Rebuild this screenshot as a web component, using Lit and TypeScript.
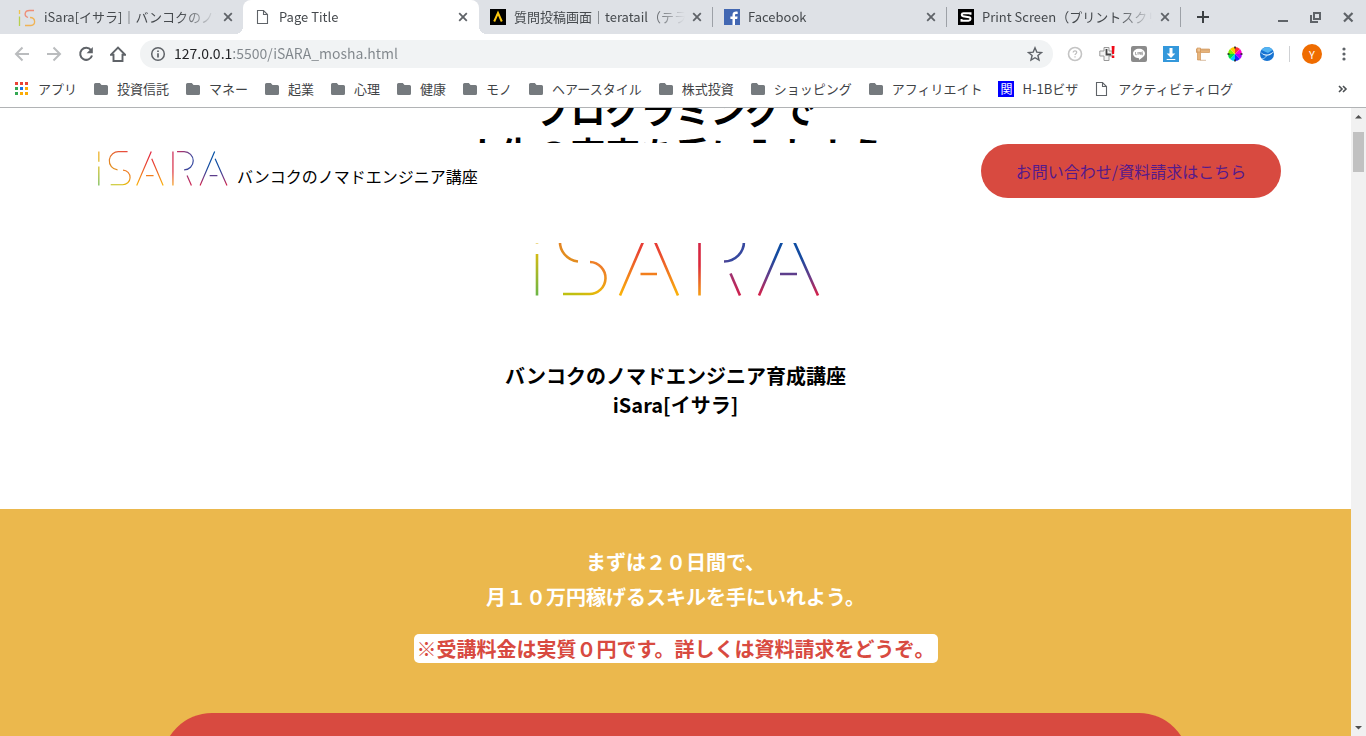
import { LitElement, html, css, svg } from "lit";
import { customElement } from "lit/decorators.js";

const closeIcon = html`<svg width="16" height="16" viewBox="0 0 16 16" aria-hidden="true">
  <path d="M4.2 4.2l7.6 7.6M11.8 4.2l-7.6 7.6" stroke="#5f6368" stroke-width="1.8" fill="none" />
</svg>`;

const fileIcon = html`<svg width="16" height="16" viewBox="0 0 16 16" aria-hidden="true">
  <path d="M2.500 1.500h6L12.500 5.500v9h-10zM8.500 1.500v4h4" stroke="#5f6368" stroke-width="1.1" fill="none" />
</svg>`;

const folderIcon = html`<svg width="16" height="16" viewBox="0 0 16 16" aria-hidden="true">
  <path d="M2.5 2h4.3l1.7 2h5a1.5 1.5 0 0 1 1.5 1.5v7a1.5 1.5 0 0 1-1.5 1.5h-11A1.5 1.5 0 0 1 1 12.500V3.500A1.500 1.500 0 0 1 2.500 2z" fill="#757a7e" />
</svg>`;

const appsIcon = html`<svg width="16" height="16" viewBox="0 0 16 16" aria-hidden="true">
  <path d="M1 1h3v3H1zM6 1h3v3H6zM11 1h3v3h-3z" fill="#ea4335" />
  <path d="M1 6h3v3H1zM1 11h3v3H1z" fill="#34a853" />
  <path d="M6 6h3v3H6z" fill="#1a73e8" />
  <path d="M11 6h3v3h-3zM6 11h3v3H6zM11 11h3v3h-3z" fill="#fbab05" />
</svg>`;

const isaraFavicon = html`<svg width="18" height="18" viewBox="0 0 18 18" fill="none" stroke-width="1.3" aria-hidden="true">
  <path d="M1.500 1v4" stroke="#f1c34c" />
  <path d="M1.500 7.500V17" stroke="#b7cf4e" />
  <path d="M16 1.500h-4.500c-5 0-6 5.500-1.500 7" stroke="#ee8d76" />
  <path d="M12 8.500c6 0 6 8 1 8H7" stroke="#f0b355" />
</svg>`;

const teratailFavicon = html`<svg width="16" height="16" viewBox="0 0 16 16" aria-hidden="true">
  <rect width="16" height="16" fill="#000" />
  <path d="M4.200 12.500L8 4l3.800 8.500" fill="none" stroke="#fbc711" stroke-width="2" />
</svg>`;

const facebookFavicon = html`<svg width="16" height="16" viewBox="0 0 16 16" aria-hidden="true">
  <rect width="16" height="16" fill="#4267b2" />
  <path d="M11 16V10h2.200l.4-2.400H11V6.200c0-.8.300-1.300 1.400-1.300h1.300V2.700c-2.900-.5-5.200.3-5.200 3.200v1.700H6.400V10h2.100v6z" fill="#fff" />
</svg>`;

const sFavicon = html`<svg width="16" height="16" viewBox="0 0 16 16" aria-hidden="true">
  <rect width="16" height="16" fill="#000" />
  <path d="M12.500 5.800V4.300H5.500C3.300 4.300 3.200 7 5 7.300l6 .9c2.200.4 1.900 3.500-.5 3.500h-7v-1.600" fill="none" stroke="#fff" stroke-width="2" />
</svg>`;

const visaIcon = html`<span class="visa">関</span>`;

const tabs = [
  { title: "iSara[イサラ]｜バンコクのノマドエンジニア", icon: isaraFavicon, state: "first" },
  { title: "Page Title", icon: fileIcon, state: "active" },
  { title: "質問投稿画面｜teratail（テラテイル）", icon: teratailFavicon, state: "lined" },
  { title: "Facebook", icon: facebookFavicon, state: "lined" },
  { title: "Print Screen（プリントスクリーン）", icon: sFavicon, state: "lined" },
];

const bookmarks = [
  { label: "アプリ", icon: appsIcon },
  ...["投資信託", "マネー", "起業", "心理", "健康", "モノ", "ヘアースタイル", "株式投資", "ショッピング", "アフィリエイト"].map(
    (label) => ({ label, icon: folderIcon })
  ),
  { label: "H-1Bビザ", icon: visaIcon },
  { label: "アクティビティログ", icon: fileIcon },
];

const extensions = [
  {
    name: "ヘルプ",
    art: svg`<circle cx="8" cy="8" r="6.500" fill="none" stroke="#c4c4c4" stroke-width="1.600"/>
      <path d="M6.200 6.600c0-2.400 3.700-2.200 3.500-.1-.1 1.200-1.700 1.200-1.700 2.600M8 10.300v1.300" fill="none" stroke="#bdbdbd" stroke-width="1.200"/>`,
  },
  {
    name: "時計",
    art: svg`<path d="M5 1.500h5V5h3v5h-3v4.500H5V10H.800V5H5z" fill="#f3f3f3" stroke="#999" stroke-width="1"/>
      <path d="M7.500 3v5.500H12" fill="none" stroke="#444" stroke-width="1.800"/>
      <path d="M12.600 0h3l-.5 8h-2zM12.800 9.500h2.500V12h-2.500z" fill="#f00a18"/>`,
  },
  {
    name: "LINE",
    art: svg`<rect width="16" height="16" rx="2" fill="#8b8b8b"/>
      <path d="M8 2.700c3.300 0 6 2.100 6 4.800 0 2.200-2.500 4.300-6 6.500v-1.800c-3.300 0-6-2-6-4.700s2.700-4.800 6-4.800z" fill="#fff"/>
      <path d="M4.500 6v2.700h1.300M6.900 6v2.700M8 8.700V6l1.500 2.500V6M12 6h-1.300v2.700H12M10.700 7.400H12" fill="none" stroke="#8b8b8b" stroke-width=".7"/>`,
  },
  {
    name: "ダウンロード",
    art: svg`<rect width="16" height="16" fill="#3498db"/>
      <path d="M6.500 2h3v5.500h2.800L8 12 3.700 7.500h2.800zM3.700 13h8.600v1H3.700z" fill="#fff"/>`,
  },
  {
    name: "定規",
    art: svg`<path d="M1.500 3h13v3.500h-9V14H2.500V6.500h-1z" fill="#e8b47a" stroke="#c98a49" stroke-width=".6"/>
      <path d="M2 2h3.500v4H2z" fill="#f0c492" stroke="#c98a49" stroke-width=".6"/>
      <path d="M7 3.500v1.500M9 3.500v1.500M11 3.500v1.500M13 3.500v1.500M5 14.300h6" stroke="#c9a27a" stroke-width=".7"/>`,
  },
  {
    name: "カラーピッカー",
    art: svg`<path d="M8 8V1a7 7 0 0 1 5 2z" fill="#f33"/><path d="M8 8l5-5a7 7 0 0 1 2 5z" fill="#f0c"/>
      <path d="M8 8h7a7 7 0 0 1-2 5z" fill="#a0f"/><path d="M8 8l5 5a7 7 0 0 1-5 2z" fill="#22f"/>
      <path d="M8 8v7a7 7 0 0 1-5-2z" fill="#0cf"/><path d="M8 8l-5 5a7 7 0 0 1-2-5z" fill="#0d4"/>
      <path d="M8 8H1a7 7 0 0 1 2-5z" fill="#8e0"/><path d="M8 8L3 3a7 7 0 0 1 5-2z" fill="#fc0"/>
      <path d="M8 .5v2M8 13.500v2M.5 8h2M13.500 8h2" stroke="#222" stroke-width="1.600"/>`,
  },
  {
    name: "メール",
    art: svg`<circle cx="8" cy="8" r="7" fill="#1673d2"/>
      <path d="M2.500 4c3-4 8-4 11 0L9 7z" fill="#54b4f2"/>
      <path d="M1.200 5.500C4.500 9.500 9 9.500 14.800 5.500 11 11 5 11.500 1.200 5.500z" fill="#f2faff"/>
      <path d="M3 13c2-.5 3.500-1.500 4.500-3" fill="none" stroke="#9fd2f7" stroke-width="1"/>`,
  },
];

/** The rainbow line-drawn iSARA mark. Its height follows its width. */
@customElement("isara-logo")
export class IsaraLogo extends LitElement {
  static styles = css`
    :host {
      display: block;
    }
    .mark {
      display: block;
      width: 100%;
      overflow: visible;
      fill: none;
      stroke-width: 2.600;
    }
  `;

  render() {
    return html`<svg class="mark" viewBox="-2 0 285 76" role="img" aria-label="iSARA">
      <defs>
        <linearGradient id="i" gradientUnits="userSpaceOnUse" x1="0" y1="0" x2="0" y2="76">
          <stop offset="0" stop-color="#f2a81d" /><stop offset=".45" stop-color="#d3bb15" /><stop offset="1" stop-color="#6ab546" />
        </linearGradient>
        <linearGradient id="s1" gradientUnits="userSpaceOnUse" x1="64" y1="0" x2="34" y2="42">
          <stop offset="0" stop-color="#e8483f" /><stop offset="1" stop-color="#e2921d" />
        </linearGradient>
        <linearGradient id="s2" gradientUnits="userSpaceOnUse" x1="62" y1="42" x2="40" y2="75">
          <stop offset="0" stop-color="#ee7a2b" /><stop offset=".6" stop-color="#eeb40a" /><stop offset="1" stop-color="#bfc011" />
        </linearGradient>
        <linearGradient id="a1" gradientUnits="userSpaceOnUse" x1="0" y1="0" x2="0" y2="76">
          <stop offset="0" stop-color="#e0203c" /><stop offset=".4" stop-color="#e94433" /><stop offset="1" stop-color="#fbb508" />
        </linearGradient>
        <linearGradient id="r1" gradientUnits="userSpaceOnUse" x1="0" y1="0" x2="0" y2="76">
          <stop offset="0" stop-color="#c81f50" /><stop offset=".6" stop-color="#dc2a3a" /><stop offset="1" stop-color="#f6a012" />
        </linearGradient>
        <linearGradient id="r2" gradientUnits="userSpaceOnUse" x1="173" y1="0" x2="208" y2="16">
          <stop offset="0" stop-color="#c83060" /><stop offset="1" stop-color="#36489f" />
        </linearGradient>
        <linearGradient id="r3" gradientUnits="userSpaceOnUse" x1="0" y1="50" x2="0" y2="76">
          <stop offset="0" stop-color="#953577" /><stop offset="1" stop-color="#d2214b" />
        </linearGradient>
        <linearGradient id="a2" gradientUnits="userSpaceOnUse" x1="0" y1="0" x2="0" y2="76">
          <stop offset="0" stop-color="#0053a8" /><stop offset=".5" stop-color="#174a9f" /><stop offset=".75" stop-color="#6a3b88" /><stop offset="1" stop-color="#dc1f45" />
        </linearGradient>
      </defs>
      <path stroke="url(#i)" d="M2 1V23.500M2 34V75.500" />
      <path stroke="url(#s1)" d="M65 1.500H47A20 20 0 0 0 43 41.500" />
      <path stroke="url(#s2)" d="M55 42A16 16 0 0 1 54 74H28" />
      <path stroke="url(#a1)" d="M85 75.500L117 1M118 17L143 75.500M105.500 54H122" />
      <path stroke="url(#r1)" d="M164.500 1V75.500" />
      <path stroke="url(#r2)" d="M173.500 1.500H189A20 20 0 0 1 189 41.500" />
      <path stroke="url(#r3)" d="M195.500 53.500L205 75.500" />
      <path stroke="url(#a2)" d="M224 75.500L256 1M257 17L283 75.500M245 54H262" />
    </svg>`;
  }
}

@customElement("app-root")
export class AppRoot extends LitElement {
  static styles = css`
    :host {
      display: flex;
      flex-direction: column;
      height: 100vh;
      overflow: hidden;
      background: #fff;
      color: #000;
      font-family: "Noto Sans CJK JP", sans-serif;
    }
    * {
      box-sizing: border-box;
    }
    button {
      display: grid;
      place-items: center;
      flex: none;
      padding: 0;
      border: 0;
      background: none;
      font: inherit;
    }
    a {
      text-decoration: none;
    }
    svg {
      display: block;
      flex: none;
    }

    /* tab strip */
    .tabs {
      display: flex;
      flex: none;
      height: 34px;
      padding: 0 10px;
      background: #dee1e6;
    }
    .tab {
      position: relative;
      display: flex;
      align-items: center;
      flex: 0 1 234px;
      min-width: 0;
      padding: 0 7px 0 12px;
      color: #45494d;
      font-size: 13px;
      line-height: 20px;
    }
    .tab-icon {
      display: grid;
      place-items: center;
      flex: none;
      width: 16px;
      height: 16px;
    }
    .tab-title {
      flex: 1;
      min-width: 0;
      margin-left: 8px;
      overflow: hidden;
      white-space: nowrap;
      -webkit-mask-image: linear-gradient(to left, transparent 4px, #000 40px);
      mask-image: linear-gradient(to left, transparent 4px, #000 40px);
    }
    .first {
      padding: 0 8px 0 10px;
    }
    .first .tab-icon {
      justify-content: end;
    }
    .lined::after {
      content: "";
      position: absolute;
      right: -1px;
      top: 7px;
      width: 1px;
      height: 20px;
      background: #9da1a7;
    }
    .active {
      flex-basis: 236px;
      margin: 0 -1px;
      padding-right: 8px;
      border-radius: 8px 8px 0 0;
      background: #fff;
    }
    .active::before,
    .active::after {
      content: "";
      position: absolute;
      bottom: 0;
      width: 8px;
      height: 8px;
    }
    .active::before {
      right: 100%;
      background: radial-gradient(circle at 0 0, transparent 8px, #fff 8px);
    }
    .active::after {
      left: 100%;
      background: radial-gradient(circle at 100% 0, transparent 8px, #fff 8px);
    }
    .new-tab {
      width: 46px;
    }
    .window-buttons {
      display: flex;
      gap: 16px;
      margin-left: auto;
    }

    /* toolbar */
    .toolbar {
      display: flex;
      align-items: center;
      flex: none;
      height: 40px;
      padding: 0 14px;
    }
    .nav {
      display: flex;
      gap: 16px;
    }
    .omnibox {
      display: flex;
      align-items: center;
      flex: 1;
      height: 28px;
      margin: 0 14px;
      padding: 0 10px;
      border-radius: 14px;
      background: #f1f3f4;
    }
    .url {
      flex: 1;
      min-width: 0;
      height: 24px;
      margin: 0 8px;
      padding: 0 0 2px;
      border: 0;
      outline: 0;
      background: linear-gradient(90deg, #202124 59px, #80868b 59px);
      -webkit-background-clip: text;
      background-clip: text;
      color: transparent;
      font: 14px/22px "Noto Sans CJK JP", sans-serif;
    }
    .extensions {
      display: flex;
      gap: 16px;
    }
    .rule {
      width: 1px;
      height: 16px;
      margin: 0 12px 0 14px;
      background: #cfd1d4;
    }
    .avatar {
      width: 20px;
      height: 20px;
      border-radius: 50%;
      background: #ef6c00;
      color: #fff;
      font-size: 11px;
      line-height: 20px;
    }
    .menu {
      margin-left: 14px;
    }

    /* bookmarks */
    .bookmarks {
      display: flex;
      align-items: center;
      flex: none;
      gap: 16px;
      height: 34px;
      padding: 0 14px 4px;
      border-bottom: 1px solid #b1b3b5;
    }
    .bookmark {
      display: flex;
      align-items: center;
      flex: none;
      gap: 8px;
      color: #3f4346;
      font-size: 13px;
      line-height: 20px;
    }
    .visa {
      width: 16px;
      height: 16px;
      background: #00f;
      color: #fff;
      font-size: 12px;
      line-height: 16px;
      text-align: center;
    }
    .more {
      margin-left: auto;
    }

    /* page */
    .viewport {
      display: flex;
      flex: 1;
      min-height: 0;
    }
    .page {
      position: relative;
      flex: 1;
      min-width: 0;
      overflow: hidden;
      text-align: center;
    }
    .site-header {
      position: absolute;
      inset: 35px 0 auto;
      display: flex;
      align-items: flex-start;
      justify-content: space-between;
      height: 100px;
      padding: 1px 70px 0 97px;
      background: #fff;
    }
    .brand {
      display: flex;
      align-items: flex-end;
      gap: 10px;
      padding-top: 7px;
      font-size: 16px;
      line-height: 24px;
    }
    .brand-logo {
      width: 130px;
    }
    .brand-name {
      margin-bottom: -2px;
    }
    .contact {
      width: 300px;
      border-radius: 27px;
      background: #d84a40;
      color: #551a8b;
      font-size: 16px;
      line-height: 54px;
    }
    .hero {
      margin-top: -21px;
      padding-bottom: 90px;
    }
    .headline {
      margin: 0;
      font-size: 35px;
      font-weight: 700;
      line-height: 44px;
    }
    .hero-logo {
      width: 285px;
      margin: 45px auto 65px;
    }
    .subtitle {
      margin: 0;
      font-size: 20px;
      font-weight: 700;
      line-height: 29px;
    }
    .offer {
      padding: 35px 0 48px;
      background: #ebb84d;
      color: #fff;
      font-size: 20px;
      font-weight: 700;
    }
    .pitch {
      margin: 0 0 20px;
      line-height: 35px;
    }
    .note {
      display: inline-block;
      padding: 0 3px;
      border-radius: 5px;
      background: #fff;
      color: #d84a40;
      line-height: 29px;
    }
    .apply {
      display: block;
      height: 100px;
      margin: 50px 12% 0;
      border-radius: 50px;
      background: #d84a40;
    }

    /* scroll bar */
    .scrollbar {
      display: flex;
      flex-direction: column;
      flex: none;
      width: 15px;
      background: #f1f1f1;
    }
    .thumb {
      height: 40px;
      margin: 7px 2px auto;
      background: #c1c1c1;
    }
  `;

  render() {
    return html`
      <nav class="tabs" aria-label="タブ">
        ${tabs.map(
          (tab) => html`<div class="tab ${tab.state}">
            <span class="tab-icon">${tab.icon}</span>
            <span class="tab-title">${tab.title}</span>
            <button aria-label="タブを閉じる">${closeIcon}</button>
          </div>`
        )}
        <button class="new-tab" aria-label="新しいタブ">
          <svg width="16" height="16" viewBox="0 0 16 16"><path d="M8 2v12M2 8h12" stroke="#3c4043" stroke-width="2" /></svg>
        </button>
        <div class="window-buttons">
          <button aria-label="最小化">
            <svg width="16" height="16" viewBox="0 0 16 16"><path d="M2 12h10" stroke="#5f6368" stroke-width="2" /></svg>
          </button>
          <button aria-label="元に戻す">
            <svg width="16" height="16" viewBox="0 0 16 16"><path d="M6 4h6v6H6zM3 6v7h7" fill="none" stroke="#5f6368" stroke-width="2" /></svg>
          </button>
          <button aria-label="閉じる">
            <svg width="16" height="16" viewBox="0 0 16 16"><path d="M4 4l8.500 8.500M12.500 4L4 12.500" stroke="#5f6368" stroke-width="2.200" /></svg>
          </button>
        </div>
      </nav>

      <div class="toolbar">
        <div class="nav">
          <button aria-label="戻る">
            <svg width="16" height="16" viewBox="0 0 16 16"><path d="M15 8H2.500M8.500 1.500L2 8l6.500 6.500" fill="none" stroke="#babcbe" stroke-width="2" /></svg>
          </button>
          <button aria-label="進む">
            <svg width="16" height="16" viewBox="0 0 16 16"><path d="M1 8h12.500M7.500 1.500L14 8l-6.500 6.500" fill="none" stroke="#babcbe" stroke-width="2" /></svg>
          </button>
          <button aria-label="再読み込み">
            <svg width="16" height="16" viewBox="0 0 16 16">
              <path d="M13 4.200A6 6 0 1 0 14 9.500" fill="none" stroke="#5f6368" stroke-width="2" />
              <path d="M14.800 1v6.200H8.600z" fill="#5f6368" />
            </svg>
          </button>
          <button aria-label="ホーム">
            <svg width="16" height="16" viewBox="0 0 16 16"><path d="M.8 8.800L8 1.600l7.200 7.200h-2.700V15h-9V8.800z" fill="none" stroke="#5f6368" stroke-width="1.900" /></svg>
          </button>
        </div>
        <div class="omnibox">
          <svg width="16" height="16" viewBox="0 0 16 16">
            <circle cx="8" cy="8" r="6.300" fill="none" stroke="#5f6368" stroke-width="1.500" />
            <path d="M8 7.200v4.300M8 4.400v1.600" stroke="#5f6368" stroke-width="1.700" />
          </svg>
          <input class="url" type="text" aria-label="アドレス" value="127.0.0.1:5500/iSARA_mosha.html" />
          <button aria-label="ブックマークに追加">
            <svg width="16" height="16" viewBox="0 0 16 16">
              <path d="M8 1.800l1.800 4.300 4.700.4-3.600 3 1.100 4.600-4-2.400-4 2.400 1.100-4.600-3.600-3 4.700-.4z" fill="none" stroke="#5f6368" stroke-width="1.400" />
            </svg>
          </button>
        </div>
        <div class="extensions">
          ${extensions.map(
            (ext) => html`<button aria-label=${ext.name}><svg width="16" height="16" viewBox="0 0 16 16">${ext.art}</svg></button>`
          )}
        </div>
        <span class="rule"></span>
        <button class="avatar" aria-label="プロフィール">Y</button>
        <button class="menu" aria-label="メニュー">
          <svg width="16" height="16" viewBox="0 0 16 16" fill="#5f6368">
            <circle cx="8" cy="3" r="1.600" /><circle cx="8" cy="8" r="1.600" /><circle cx="8" cy="13" r="1.600" />
          </svg>
        </button>
      </div>

      <nav class="bookmarks" aria-label="ブックマーク">
        ${bookmarks.map((b) => html`<a class="bookmark" href="#">${b.icon}<span>${b.label}</span></a>`)}
        <button class="more" aria-label="他のブックマーク">
          <svg width="16" height="16" viewBox="0 0 16 16"><path d="M3 5l3 3-3 3M7 5l3 3-3 3" fill="none" stroke="#4b4f52" stroke-width="1.600" /></svg>
        </button>
      </nav>

      <div class="viewport">
        <main class="page">
          <section class="hero">
            <h1 class="headline">プログラミングで<br />人生の充実を手に入れよう</h1>
            <isara-logo class="hero-logo"></isara-logo>
            <h2 class="subtitle">バンコクのノマドエンジニア育成講座<br />iSara[イサラ]</h2>
          </section>
          <section class="offer">
            <p class="pitch">まずは２０日間で、<br />月１０万円稼げるスキルを手にいれよう。</p>
            <span class="note">※受講料金は実質０円です。詳しくは資料請求をどうぞ。</span>
            <a class="apply" href="#" aria-label="資料請求"></a>
          </section>
          <header class="site-header">
            <div class="brand">
              <isara-logo class="brand-logo"></isara-logo>
              <span class="brand-name">バンコクのノマドエンジニア講座</span>
            </div>
            <a class="contact" href="#">お問い合わせ/資料請求はこちら</a>
          </header>
        </main>
        <div class="scrollbar" aria-hidden="true">
          <svg width="15" height="17" viewBox="0 0 15 17"><path d="M4 10.500L7.500 7l3.500 3.500z" fill="#505050" /></svg>
          <div class="thumb"></div>
          <svg width="15" height="17" viewBox="0 0 15 17"><path d="M4 7l3.500 3.500L11 7z" fill="#505050" /></svg>
        </div>
      </div>
    `;
  }
}
